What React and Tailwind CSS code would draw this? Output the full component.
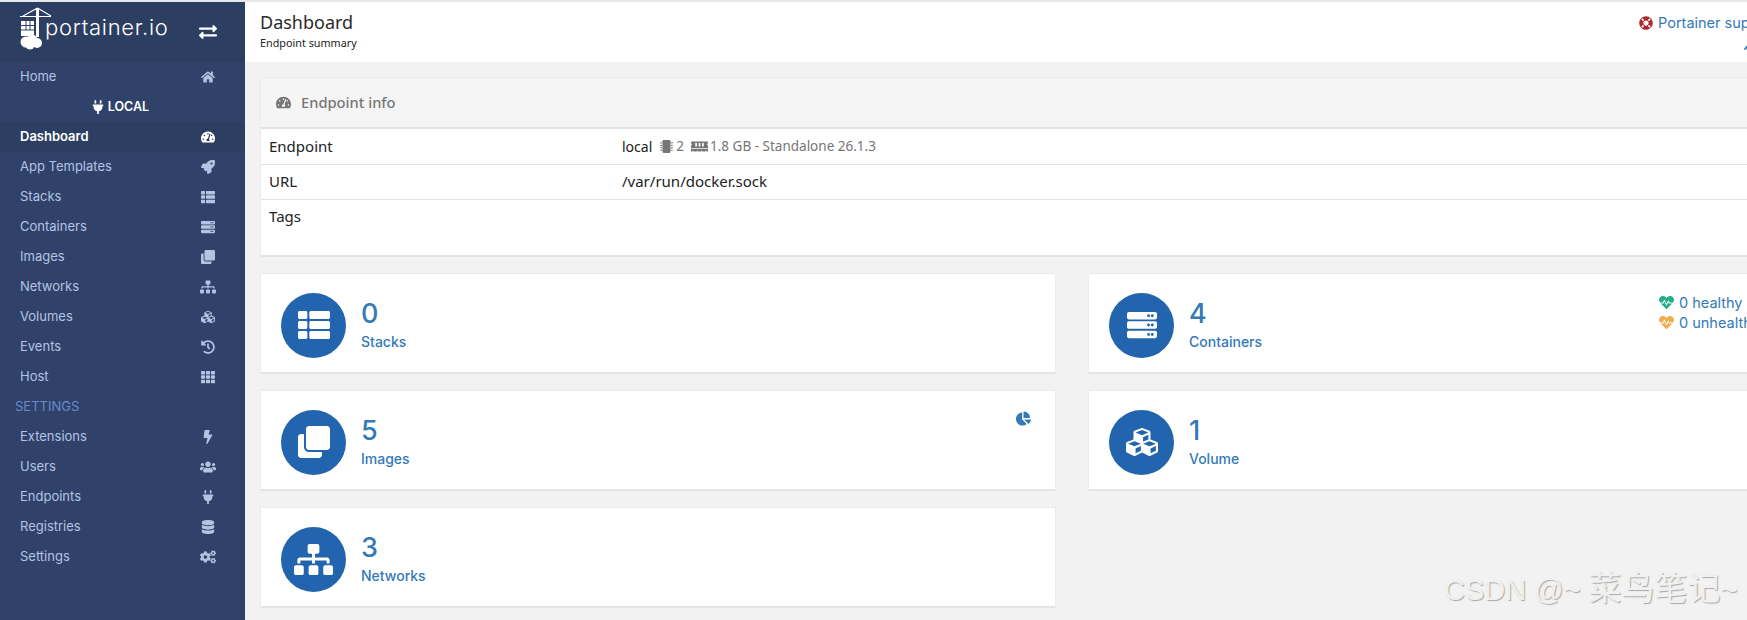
import React from "react";
import {
  FaHome, FaPlug, FaTachometerAlt, FaRocket, FaThList, FaServer, FaClone, FaSitemap, FaCubes,
  FaHistory, FaTh, FaBolt, FaUsers, FaDatabase, FaCogs, FaExchangeAlt, FaLifeRing, FaMicrochip,
  FaMemory, FaHeartbeat, FaChartPie, FaWrench,
} from "react-icons/fa";

function NavRow({ label, Icon, active, size = 14 }) {
  return (
    <div className={`flex h-[30px] items-center pl-5 text-[13px] ${active ? "bg-[#2d3e63] font-semibold text-white" : "text-[#b4c3e3]"}`}>
      <span className="flex-1">{label}</span>
      <span className={`flex w-[20px] justify-center mr-[27px] ${active ? "text-white" : "text-[#b4c3e3]"}`}>
        <Icon size={size} />
      </span>
    </div>
  );
}

function Logo() {
  return (
    <svg width="24" height="44" viewBox="0 0 32 44" className="shrink-0 w-[32px] mr-[-8px] mt-[-6px]" fill="none">
      <path d="M0 9.5H31M17.5 1V29M17.5 1L3 9M17.5 1L31 9" stroke="#fff" strokeWidth="1.2" />
      <path d="M16 1H19V30H16Z" fill="#fff" />
      <path d="M1 14h13v15H1z" fill="#fff" />
      <path d="M1 18.5h13M1 23h13M6 14v9M10 14v9" stroke="#30426a" strokeWidth="1" />
      <circle cx="6" cy="35" r="5.5" fill="#fff" />
      <circle cx="12" cy="33" r="5.5" fill="#fff" />
      <circle cx="17" cy="36" r="5" fill="#fff" />
      <circle cx="10" cy="38" r="4.5" fill="#fff" />
    </svg>
  );
}

function StatCard({ value, label, Icon, iconSize = 32, children }) {
  return (
    <div className="flex h-[101px] items-center border border-[#ebebeb] border-b-2 border-b-[#e4e4e4] bg-white pl-5">
      <div className="mt-[4px] flex h-[65px] w-[65px] shrink-0 items-center justify-center rounded-full bg-[#2264ae] text-white">
        <Icon size={iconSize} />
      </div>
      <div className="ml-[15px] flex-1 text-[#337ab7]">
        <div className="mt-[2px] text-[27px] leading-[34px] font-medium font-['Inter',sans-serif]">{value}</div>
        <div className="mt-[2px] text-[14px] leading-[18px] font-medium font-['Inter',sans-serif]">{label}</div>
      </div>
      {children}
    </div>
  );
}

export default function App() {
  const font = "font-['Inter','Noto_Sans',sans-serif]";
  return (
    <div className={`relative flex h-[620px] w-[1747px] overflow-hidden bg-[#f2f2f2] ${font}`}>
      <aside className="flex w-[245px] shrink-0 flex-col border-t-2 border-t-[#e8e8e8] bg-[#30426a]">
        <div className="flex h-[60px] items-center bg-[#2d3e63] pl-5">
          <Logo />
          <span className="ml-[1px] w-[124px] text-[22px] leading-none font-light tracking-[0.7px] text-white font-['Inter',sans-serif] mt-[-10px] shrink-0 whitespace-nowrap">
            portainer.io
          </span>
          <FaExchangeAlt size={18} className="ml-[30px] text-white" />
        </div>
        <NavRow label="Home" Icon={FaHome} />
        <div className="flex h-[30px] items-center justify-center gap-[3px] text-[12.5px] font-semibold text-white pr-[5px]">
          <FaPlug size={14} />
          <span>LOCAL</span>
        </div>
        <NavRow label="Dashboard" Icon={FaTachometerAlt} active />
        <NavRow label="App Templates" Icon={FaRocket} />
        <NavRow label="Stacks" Icon={FaThList} />
        <NavRow label="Containers" Icon={FaServer} />
        <NavRow label="Images" Icon={FaClone} />
        <NavRow label="Networks" Icon={FaSitemap} size={16} />
        <NavRow label="Volumes" Icon={FaCubes} />
        <NavRow label="Events" Icon={FaHistory} />
        <NavRow label="Host" Icon={FaTh} />
        <div className="flex h-[30px] items-center pl-[15px] text-[13px] text-[#6a8acb]">SETTINGS</div>
        <NavRow label="Extensions" Icon={FaBolt} />
        <NavRow label="Users" Icon={FaUsers} size={16} />
        <NavRow label="Endpoints" Icon={FaPlug} />
        <NavRow label="Registries" Icon={FaDatabase} />
        <NavRow label="Settings" Icon={FaCogs} size={16} />
      </aside>

      <main className="flex min-w-0 flex-1 flex-col">
        <header className="flex h-[62px] shrink-0 border-t-2 border-t-[#e8e8e8] bg-white pl-[15px]">
          <div className="flex-1 pt-[10px]">
            <div className="text-[18px] leading-[20px] text-[#2b2b2b] font-['Noto_Sans',sans-serif]">Dashboard</div>
            <div className="mt-[4px] text-[10.8px] leading-[14px] text-[#222] font-['Noto_Sans',sans-serif]">Endpoint summary</div>
          </div>
          <div className="w-[108px] shrink-0 overflow-hidden pt-[11px] whitespace-nowrap">
            <div className="flex items-center gap-[5px] text-[14.5px] leading-[20px] text-[#337ab7]">
              <FaLifeRing size={14} className="shrink-0 text-[#b0282c]" />
              <span>Portainer support</span>
            </div>
            <div className="mt-[9px] flex pl-[105px] text-[#337ab7]">
              <FaWrench size={8} className="shrink-0" />
            </div>
          </div>
        </header>

        <div className="w-[1640px] pt-[15px] pl-[15px]">
          <section className="border border-[#ebebeb] border-b-2 border-b-[#e4e4e4] bg-white">
            <div className="flex h-[51px] items-center gap-[10px] border-b-2 border-b-[#e2e2e2] bg-[#f5f5f5] pb-[1px] pl-[15px] text-[14.7px] text-[#767676] font-['Noto_Sans',sans-serif]">
              <FaTachometerAlt size={15} />
              <span className="font-medium">Endpoint info</span>
            </div>
            <div className="text-[15px] text-[#222] font-['Noto_Sans',sans-serif]">
              <div className="flex h-[36px] items-center border-b border-[#e2e2e2] pb-[1px] pl-[8px]">
                <div className="w-[353px]">Endpoint</div>
                <div className="flex items-center text-[14px]">
                  <span>local</span>
                  <span className="ml-[8px] flex items-center text-[13.5px] text-[#767676]">
                    <FaMicrochip size={13} />
                    <span className="ml-[3px]">2</span>
                    <FaMemory size={17} className="ml-[7px]" />
                    <span className="ml-[2px]">1.8 GB - Standalone 26.1.3</span>
                  </span>
                </div>
              </div>
              <div className="flex h-[35px] items-center border-b border-[#e2e2e2] pb-[1px] pl-[8px]">
                <div className="w-[353px]">URL</div>
                <div>/var/run/docker.sock</div>
              </div>
              <div className="h-[55px] pt-[5px] pl-[8px]">Tags</div>
            </div>
          </section>

          <div className="mt-[16px] grid grid-cols-[796px_796px] gap-x-[32px] gap-y-[16px]">
            <StatCard value="0" label="Stacks" Icon={FaThList} />
            <StatCard value="4" label="Containers" Icon={FaServer} iconSize={30}>
              <div className="mb-[21px] w-[224px] shrink-0 text-[14.5px] leading-[20px] text-[#337ab7]">
                <div className="flex items-center gap-[5px]">
                  <FaHeartbeat size={15} className="text-[#23ae89]" />
                  <span>0 healthy</span>
                </div>
                <div className="flex items-center gap-[5px] whitespace-nowrap">
                  <FaHeartbeat size={15} className="text-[#f0ad4e]" />
                  <span>0 unhealthy</span>
                </div>
              </div>
            </StatCard>
            <StatCard value="5" label="Images" Icon={FaClone}>
              <div className="mr-[24px] mb-[44px] text-[#337ab7]">
                <FaChartPie size={15} />
              </div>
            </StatCard>
            <StatCard value="1" label="Volume" Icon={FaCubes} />
            <StatCard value="3" label="Networks" Icon={FaSitemap} iconSize={39} />
          </div>
        </div>
      </main>

      <div className="absolute top-[570px] left-[1444px] whitespace-nowrap text-[29px] leading-[38px] text-[#f0f0f0] [text-shadow:1px_1px_1px_#a8a8a8] font-['Liberation_Sans','Noto_Sans_CJK_SC',sans-serif]">
        CSDN @~<span className="ml-[8px] text-[33px]">菜鸟笔记</span>~
      </div>
    </div>
  );
}
